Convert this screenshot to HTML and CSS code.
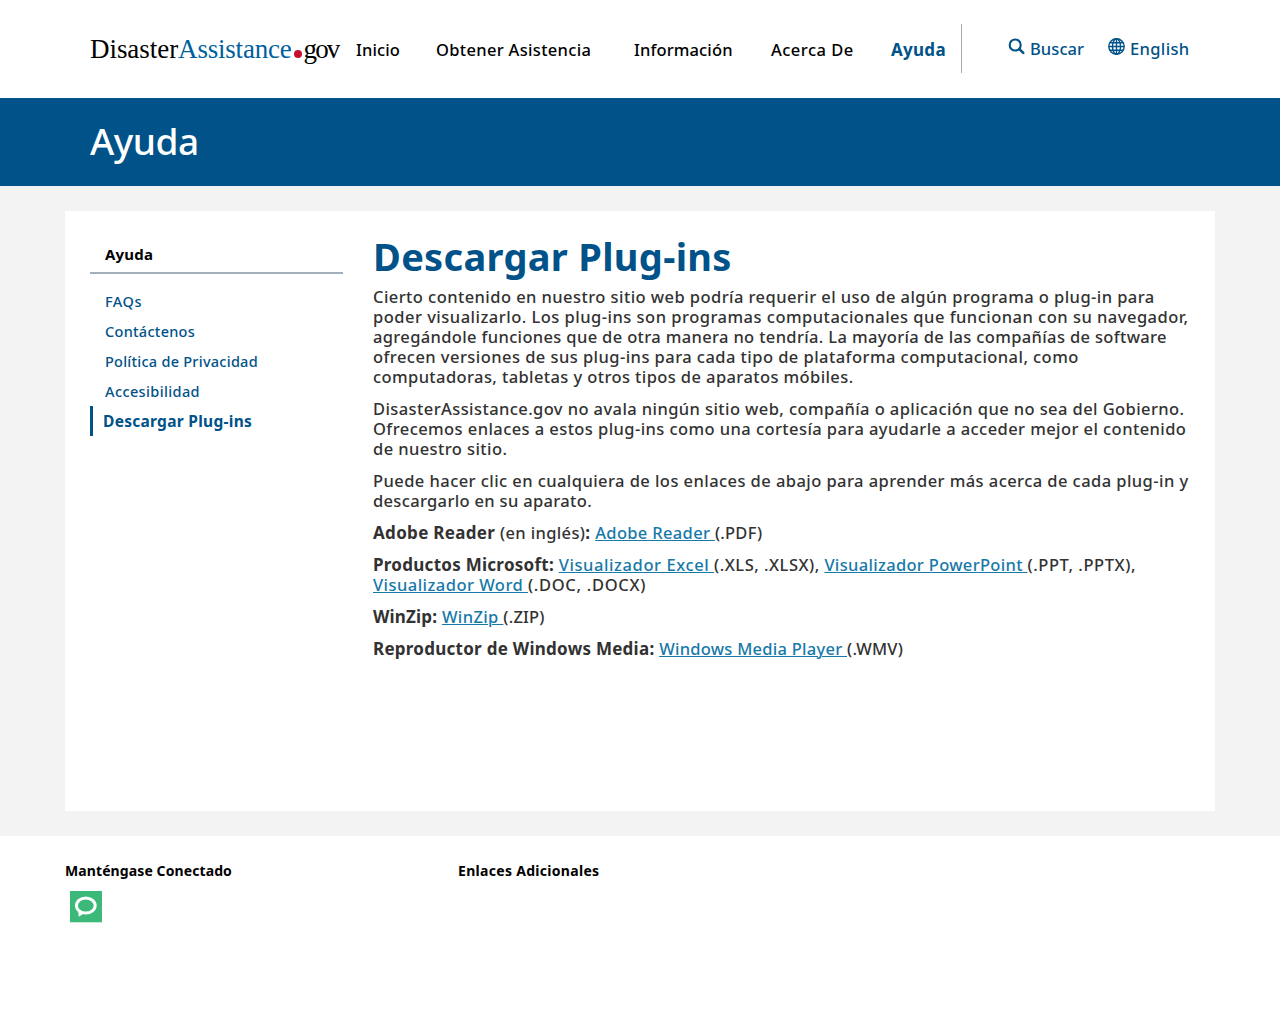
FILE: index.html
```html
<!DOCTYPE html>
<html lang="es">
<head>
<meta charset="utf-8">
<title>Descargar Plug-ins</title>
<link rel="stylesheet" href="styles.css">
</head>
<body>
<header class="header">
  <div class="logo"><span class="logo-black">Disaster</span><span class="logo-blue">Assistance</span><span class="logo-dot"></span><span class="logo-gov">gov</span></div>
  <nav class="nav">
    <a class="n1">Inicio</a><a class="n2">Obtener Asistencia</a><a class="n3">Información</a><a class="n4">Acerca De</a><a class="n5 current">Ayuda</a>
  </nav>
  <div class="tools">
    <a class="search"><svg width="17" height="17" viewBox="0 0 17 17"><circle cx="7.2" cy="7" r="5.5" fill="none" stroke="#005288" stroke-width="2.1"/><path d="M11.6 11.4l3.6 3.5" stroke="#005288" stroke-width="2.6" stroke-linecap="round"/></svg><span class="search-label">Buscar</span></a>
    <a class="language"><svg width="17" height="17" viewBox="0 0 17 17" fill="none" stroke="#005288" stroke-width="1.4"><circle cx="8.5" cy="8.5" r="7.7"/><ellipse cx="8.5" cy="8.5" rx="4" ry="7.7"/><path d="M8.5 1v15M1 8.5h15M2 4.8h13M2 12.2h13"/></svg><span class="language-label">English</span></a>
  </div>
</header>
<div class="banner"><span>Ayuda</span></div>
<div class="page">
  <div class="card">
    <aside class="side">
      <div class="side-title">Ayuda</div>
      <ul>
        <li class="s1">FAQs</li>
        <li class="s2">Contáctenos</li>
        <li class="s3">Política de Privacidad</li>
        <li class="s4">Accesibilidad</li>
        <li class="active">Descargar Plug-ins</li>
      </ul>
    </aside>
    <main class="main">
      <h1>Descargar Plug-ins</h1>
      <p><span class="l1">Cierto contenido en nuestro sitio web podría requerir el uso de algún programa o plug-in para</span><br><span class="l2">poder visualizarlo. Los plug-ins son programas computacionales que funcionan con su navegador,</span><br><span class="l3">agregándole funciones que de otra manera no tendría. La mayoría de las compañías de software</span><br><span class="l4">ofrecen versiones de sus plug-ins para cada tipo de plataforma computacional, como</span><br><span class="l5">computadoras, tabletas y otros tipos de aparatos móbiles.</span></p>
      <p><span class="l6">DisasterAssistance.gov no avala ningún sitio web, compañía o aplicación que no sea del Gobierno.</span><br><span class="l7">Ofrecemos enlaces a estos plug-ins como una cortesía para ayudarle a acceder mejor el contenido</span><br><span class="l8">de nuestro sitio.</span></p>
      <p><span class="l9">Puede hacer clic en cualquiera de los enlaces de abajo para aprender más acerca de cada plug-in y</span><br><span class="l10">descargarlo en su aparato.</span></p>
      <p><b class="b1">Adobe Reader</b> <span class="t1">(en inglés)</span><b>:</b> <a class="a1">Adobe Reader </a><span class="t2">(.PDF)</span></p>
      <p><b class="b2">Productos Microsoft:</b> <a class="a2">Visualizador Excel </a><span class="t3">(.XLS, .XLSX),</span> <a class="a3">Visualizador PowerPoint </a><span class="t4">(.PPT, .PPTX),</span><br><a class="a4">Visualizador Word </a><span class="t5">(.DOC, .DOCX)</span></p>
      <p><b class="b3">WinZip:</b> <a class="a5">WinZip </a><span class="t6">(.ZIP)</span></p>
      <p><b class="b4">Reproductor de Windows Media:</b> <a class="a6">Windows Media Player </a><span class="t7">(.WMV)</span></p>
    </main>
  </div>
</div>
<footer class="footer">
  <section class="connect"><h2 class="f1">Manténgase Conectado</h2>
    <svg class="chat" width="32" height="32" viewBox="0 0 32 32"><path fill="#3cb878" d="M0 0h32v31.3H0z"/><ellipse cx="15.8" cy="14.6" rx="9.4" ry="7.5" fill="none" stroke="#fff" stroke-width="3"/><path d="M8 19l.8 6.8 5-3.4z" fill="#fff"/></svg>
  </section>
  <section><h2 class="f2">Enlaces Adicionales</h2></section>
</footer>
</body>
</html>
```
FILE: styles.css
```css
* { box-sizing: border-box; }
body { margin: 0; background: #fff; color: #323232; font: 500 16.5px/20px "Noto Sans", sans-serif; }
b { font-weight: 700; font-size: 17px; line-height: 1; }
.header { height: 98px; display: flex; padding-left: 90px; white-space: nowrap; color: #000; }
.logo { width: 266px; padding-top: 33px; font: 27px/32px "Liberation Serif", serif; letter-spacing: -.05px; }
.logo-blue { color: #005f9e; letter-spacing: -0.2px; }
.logo-gov { letter-spacing: -1.9px; }
.logo-dot { display: inline-block; width: 8px; height: 8px; margin: 0 2px 0 2px; border-radius: 50%; background: #c8102e; }
.nav { display: flex; width: 606px; height: 49px; margin-top: 24px; padding-top: 16px; border-right: 1px solid #aaa; }
.n1 { width: 80px; letter-spacing: .12px; }
.n2 { width: 198px; letter-spacing: .32px; }
.n3 { width: 137px; letter-spacing: .13px; }
.n4 { width: 120px; letter-spacing: .48px; }
.current { color: #005288; font-size: 17px; font-weight: 700; letter-spacing: .28px; }
.tools { display: flex; margin-left: 46px; padding-top: 38px; color: #005288; }
.tools a { display: flex; gap: 5px; width: 100px; }
.tools span { margin-top: 1px; }
.search-label { letter-spacing: .08px; }
.language-label { letter-spacing: .36px; }
.banner { height: 88px; padding: 17px 90px; background: #005288; color: #fff; font-size: 37px; line-height: 52px; letter-spacing: -.5px; }
.page { padding: 25px 65px; background: #f3f3f3; }
.card { height: 600px; display: flex; gap: 30px; padding: 25px; background: #fff; }
.side { width: 253px; font-size: 14.5px; color: #005288; }
.side-title { height: 38px; padding: 8px 15px 0; border-bottom: 2px solid #a5aebb; color: #000; font-weight: 700; font-size: 15px; letter-spacing: .2px; }
.side ul { margin: 12px 0 0; padding: 0; list-style: none; }
.side li { height: 30px; padding-left: 15px; line-height: 30px; }
.side .s1 { letter-spacing: .5px; }
.side .s2 { letter-spacing: .28px; }
.side .s3 { letter-spacing: .25px; }
.side .s4 { letter-spacing: .38px; }
.side .active { padding-left: 10px; border-left: 3px solid #005288; font-weight: 700; font-size: 15.5px; letter-spacing: .28px; }
.main { flex: 1; white-space: nowrap; letter-spacing: .41px; }
h1 { margin: 0 0 11px; color: #005288; font-size: 38px; line-height: 40px; letter-spacing: .31px; }
p { margin: 0 0 12px; }
.l1 { letter-spacing: .433px; }
.l2 { letter-spacing: .485px; }
.l3 { letter-spacing: .35px; }
.l4 { letter-spacing: .445px; }
.l5 { letter-spacing: .397px; }
.l6 { letter-spacing: .41px; }
.l7 { letter-spacing: .422px; }
.l9 { letter-spacing: .434px; }
.l10 { letter-spacing: .33px; }
.b1 { letter-spacing: .32px; }
.b2 { letter-spacing: .27px; }
.b3 { letter-spacing: .17px; }
.b4 { letter-spacing: .26px; }
.t1 { letter-spacing: .36px; }
.t2 { letter-spacing: .25px; }
.t3 { letter-spacing: .5px; }
.t4 { letter-spacing: .58px; }
.t5 { letter-spacing: .7px; }
.t6 { letter-spacing: .2px; }
.t7 { letter-spacing: .26px; }
.a1 { letter-spacing: .33px; }
.a2 { letter-spacing: .58px; }
.a3 { letter-spacing: .32px; }
.a4 { letter-spacing: .46px; }
.a5 { letter-spacing: .38px; }
.a6 { letter-spacing: .26px; }
.main a { color: #1779a8; text-decoration: underline; text-underline-offset: 1px; text-decoration-thickness: 1px; }
.footer { display: flex; padding: 25px 65px; color: #000; }
.footer section { width: 393px; }
.footer h2 { margin: 0; font-size: 14px; line-height: 20px; }
.footer .f1 { letter-spacing: .1px; }
.footer .f2 { letter-spacing: .3px; }
.chat { display: block; margin: 10px 0 0 5px; }
```
